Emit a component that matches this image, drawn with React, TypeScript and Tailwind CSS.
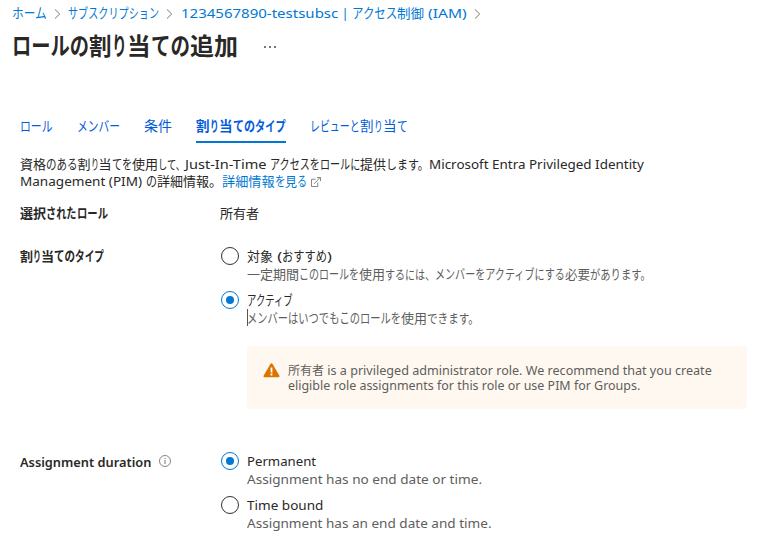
import { useLayoutEffect, useRef, useState } from "react";

type Piece = [text: string, width: number];

const kanaOnly = /^[\u3041-\u30ff]+$/;

// A run of text condensed or widened to occupy exactly the given width.
function Run({ text, width }: { text: string; width: number }) {
  const ref = useRef<HTMLSpanElement>(null);
  const [scale, setScale] = useState(1);
  useLayoutEffect(() => {
    const natural = ref.current?.offsetWidth ?? 0;
    if (natural > 0) setScale(width / natural);
  }, [text, width]);
  const stretch = kanaOnly.test(text) ? 1.05 : 1;
  return (
    <span className="block shrink-0 whitespace-pre" style={{ width }}>
      <span ref={ref} className="inline-block origin-left align-top" style={{ transform: `scale(${scale}, ${stretch})` }}>
        {text}
      </span>
    </span>
  );
}

function Line({ pieces, className = "" }: { pieces: Piece[]; className?: string }) {
  return (
    <span className={`flex ${className}`}>
      {pieces.map(([text, width], i) => (
        <Run key={i} text={text} width={width} />
      ))}
    </span>
  );
}

function Chevron() {
  return (
    <svg className="mt-1 h-3 w-[7px] shrink-0" viewBox="0 0 7 12" fill="none" stroke="#777" strokeWidth="1">
      <path d="M1 1.5 5.7 6 1 10.5" />
    </svg>
  );
}

function Radio({ checked }: { checked?: boolean }) {
  return (
    <span
      className={`flex size-[18px] shrink-0 items-center justify-center rounded-full border ${
        checked ? "border-[#0078d4]" : "border-[#323130]"
      }`}
    >
      {checked && <span className="size-2 rounded-full bg-[#0078d4]" />}
    </span>
  );
}

function Option({ checked, label, hint, caret }: { checked?: boolean; label: Piece[]; hint: Piece[]; caret?: boolean }) {
  return (
    <label className="flex h-9 gap-2">
      <Radio checked={checked} />
      <span className="relative block">
        <Line pieces={label} />
        <Line pieces={hint} className="text-[#605e5c]" />
        {caret && <span className="absolute top-[18px] left-0 h-[17px] w-px bg-[#555]" />}
      </span>
    </label>
  );
}

const tabs: { pieces: Piece[]; active?: boolean }[] = [
  { pieces: [["ロール", 33]] },
  { pieces: [["メンバー", 43]] },
  { pieces: [["条件", 28]] },
  { pieces: [["割", 14], ["り", 9], ["当", 14], ["ての", 22], ["タイプ", 31]], active: true },
  { pieces: [["レビューと", 50], ["割", 14], ["り", 9], ["当", 14], ["て", 11]] },
];

export default function App() {
  return (
    <main className="flex h-[541px] w-[767px] flex-col overflow-hidden bg-white font-['Noto_Sans','Noto_Sans_CJK_JP',sans-serif] text-[13px] leading-[18px] text-[#292827]">
      <nav className="flex pt-1 pl-3 text-[#0078d4]">
        <Line pieces={[["ホーム", 35]]} />
        <span className="flex w-[21px] pl-[7px]"><Chevron /></span>
        <Line pieces={[["サブスクリプション", 91]]} />
        <span className="flex w-[22px] pl-[7px]"><Chevron /></span>
        <Line pieces={[["1234567890-testsubsc", 157], [" | ", 14], ["アクセス", 45], ["制御", 27], [" (IAM)", 43]]} />
        <span className="flex pl-[7px]"><Chevron /></span>
      </nav>
      <header className="flex h-[50px] items-start pt-[7px] pl-3">
        <h1 className="text-[23.5px] leading-[34px] font-bold">
          <Line pieces={[["ロールの", 77], ["割", 23], ["り", 15], ["当", 24], ["ての", 39], ["追加", 48]]} />
        </h1>
        <span className="mt-[17px] ml-[26px] flex gap-[3px]">
          <i className="size-[2px] bg-[#777]" />
          <i className="size-[2px] bg-[#777]" />
          <i className="size-[2px] bg-[#777]" />
        </span>
      </header>
      <div className="mt-[45px] flex h-[26px] gap-6 pl-5 text-[13.5px] text-[#015cda]">
        {tabs.map((tab, i) => (
          <div key={i} className={tab.active ? "border-b-2 border-[#0078d4] font-bold" : ""}>
            <Line pieces={tab.pieces} />
          </div>
        ))}
      </div>
      <div className="mt-[13px] pl-5 leading-[17px]">
        <Line
          pieces={[
            ["資格", 26], ["のある", 31.5], ["割", 13], ["り", 8], ["当", 13], ["てを", 20.5], ["使用", 26], ["して、", 27],
            ["Just-In-Time ", 85], ["アクセスをロールに", 90], ["提供", 26], ["します。", 43],
            ["Microsoft Entra Privileged Identity", 215],
          ]}
        />
        <div className="flex">
          <Line pieces={[["Management (PIM) ", 126], ["の", 11], ["詳細情報", 52], ["。", 13]]} />
          <Line pieces={[["詳細情報", 52.5], ["を", 10.5], ["見", 12], ["る", 10]]} className="text-[#0078d4]" />
          <svg className="mt-1 ml-1 size-[10px]" viewBox="0 0 11 11" fill="none" stroke="#777">
            <path d="M5 2.5H.5v8h7V6M3.5 7.5l6.5-7M6.5.5h4v4" />
          </svg>
        </div>
      </div>
      <div className="mt-[14px] flex pl-5">
        <Line className="w-[200px] font-bold" pieces={[["選択", 26], ["された", 30.5], ["ロール", 31]]} />
        <Line pieces={[["所有者", 39]]} />
      </div>
      <section className="mt-[25px] flex pl-5">
        <Line className="w-[201px] font-bold" pieces={[["割", 13], ["り", 8], ["当", 13], ["ての", 21], ["タイプ", 29]]} />
        <div className="flex flex-col gap-2">
          <Option label={[["対象", 26], [" (", 9], ["おすすめ", 45], [")", 5]]}
            hint={[["一定期間", 52], ["このロールを", 60], ["使用", 26], ["するには、", 50], ["メンバーをアクティブにする", 130], ["必要", 25], ["があります。", 61]]} />
          <Option checked caret label={[["アクティブ", 46]]}
            hint={[["メンバーはいつでもこのロールを", 154], ["使用", 26], ["できます。", 52]]} />
        </div>
      </section>
      <aside className="mt-[19px] ml-[247px] flex h-[63px] w-[500px] rounded-[3px] bg-[#fff8f0] pt-[17px] pl-4 text-[12px] leading-[15px] text-[#605e5c]">
        <svg className="mr-2 h-[15px] w-[17px]" viewBox="0 0 17 15">
          <path d="M7.4 1.1Q8.5-.6 9.6 1.1L16.3 12.6Q17 14.2 15.3 14.2H1.7Q0 14.2.7 12.6Z" fill="#db7500" />
          <path d="M8.5 4.5v5M8.5 10.5v2" stroke="#fff" strokeWidth="1.8" />
        </svg>
        <div>
          <Line pieces={[["所有者", 36], [" is a privileged administrator role. We recommend that you create", 388]]} />
          <Line pieces={[["eligible role assignments for this role or use PIM for Groups.", 352]]} />
        </div>
      </aside>
      <section className="mt-[43px] flex pl-5">
        <div className="flex w-[201px] pt-px">
          <Line className="font-semibold" pieces={[["Assignment duration", 131]]} />
          <svg className="mt-[2px] ml-2 size-3" viewBox="0 0 12 12" fill="none" stroke="#777">
            <circle cx="6" cy="6" r="5.5" strokeWidth=".9" />
            <path d="M6 5v4M6 3v1.2" />
          </svg>
        </div>
        <div className="flex flex-col gap-2">
          <Option checked label={[["Permanent", 69]]} hint={[["Assignment has no end date or time.", 235]]} />
          <Option label={[["Time bound", 76]]} hint={[["Assignment has an end date and time.", 245]]} />
        </div>
      </section>
    </main>
  );
}
